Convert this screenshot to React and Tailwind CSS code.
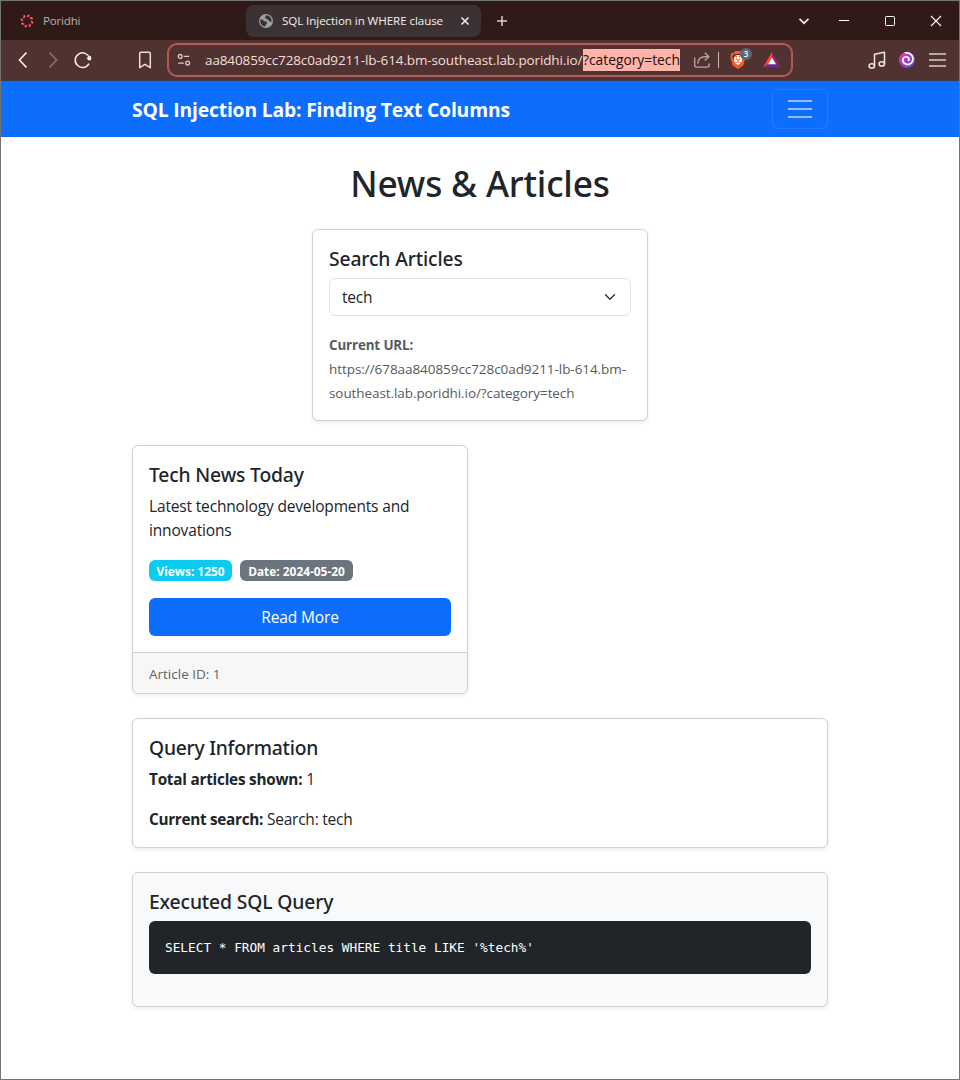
import React from "react";
import { SiBrave } from "react-icons/si";

function PoridhiLogo() {
  const petals = [0, 45, 90, 135, 180, 225, 270, 315];
  return (
    <svg width="14" height="14" viewBox="0 0 14 14" className="shrink-0">
      {petals.map((a, i) => (
        <g key={a} transform={`rotate(${a + 12} 7 7)`}>
          <path d="M6.300 2.500 7.300 1.500" stroke={i % 2 ? "#f0356f" : "#e92a72"} strokeWidth="1.900" strokeLinecap="round" />
          <circle cx="7.500" cy="1.400" r="0.800" fill="#f58a3c" />
        </g>
      ))}
    </svg>
  );
}

function Globe() {
  return (
    <svg width="14" height="14" viewBox="0 0 14 14" className="shrink-0">
      <circle cx="7" cy="7" r="7" fill="#9aa0a6" />
      <path
        d="M1.2 5.6C2.8 5.2 4 5.6 4.6 6.6c.5.8 1.6.6 2.6.9 1.2.4 1 1.6.3 2.3-.7.6-.5 1.600-1.200 2.500C3.400 12.300 1.300 9.800 1.200 7.400ZM7.600 1.300c-.9.5-.6 1.300-1.500 1.600-.8.3-.3 1.300.6 1.400 1 .1 1.300.700 1.200 1.300 1.300-.2 1.800.7 2.400 1.600.5.700 1.400.600 2.300.300C12.900 4.300 10.800 1.600 7.600 1.300Z"
        fill="#3c3233"
      />
    </svg>
  );
}

function TabStrip() {
  return (
    <div className="flex h-[39px] items-center bg-[#301a17]">
      <div className="flex w-[245px] shrink-0 items-center gap-[9px] pl-[19px]">
        <PoridhiLogo />
        <span className="text-[11.6px] tracking-[-0.2px] text-[#b9b0ae]">Poridhi</span>
      </div>
      <div className="flex h-8 w-[235px] shrink-0 items-center rounded-lg bg-[#3c3233] pl-[13px]">
        <Globe />
        <span className="ml-[9px] w-[175px] whitespace-nowrap text-[11.6px] tracking-[-0.08px] text-[#f5efee]">
          SQL Injection in WHERE clause
        </span>
        <svg width="16" height="16" viewBox="0 0 16 16" fill="none" stroke="#f0eaea" strokeWidth="1.6" className="shrink-0">
          <path d="m4.500 4.500 7 7m0-7-7 7" />
        </svg>
      </div>
      <svg width="12" height="12" viewBox="0 0 12 12" fill="none" stroke="#d9d0ce" strokeWidth="1.500" className="ml-[15px]">
        <path d="M6 1v10M1 6h10" />
      </svg>
      <div className="ml-auto flex items-center pr-[17px] text-white">
        <svg width="12" height="12" viewBox="0 0 12 12" fill="none" stroke="#ece5e4" strokeWidth="1.700">
          <path d="m1.500 3.800 4.500 4.400 4.500-4.400" />
        </svg>
        <svg width="12" height="12" viewBox="0 0 12 12" fill="none" stroke="currentColor" className="ml-[28px]">
          <path d="M1 5.500h10" />
        </svg>
        <svg width="12" height="12" viewBox="0 0 12 12" fill="none" stroke="currentColor" className="ml-[34px]">
          <rect x="1.500" y="1.500" width="9" height="9" rx="0.800" />
        </svg>
        <svg width="12" height="12" viewBox="0 0 12 12" fill="none" stroke="currentColor" strokeWidth="1.100" className="ml-[34px]">
          <path d="m1 1 10 10M11 1 1 11" />
        </svg>
      </div>
    </div>
  );
}

function BraveShield() {
  return (
    <span className="relative ml-[10px] block h-[18px] w-[18px]">
      <span className="absolute top-[4px] left-[5px] h-[10px] w-[8px] rounded-full bg-white" />
      <SiBrave className="absolute top-0 left-0 h-[18px] w-[18px] text-[#fb5a1c]" />
      <span className="absolute -top-[3px] left-[11px] flex h-3 w-3 items-center justify-center rounded-full bg-[#5f6573] text-[8px] leading-none font-semibold text-white">
        3
      </span>
    </span>
  );
}

function Toolbar() {
  return (
    <div className="flex h-[41px] items-center border-b border-[#3c3b4c] bg-[#503230]">
      <svg width="16" height="20" viewBox="0 0 16 20" fill="none" stroke="#f5eeed" strokeWidth="1.700" className="ml-[14px]">
        <path d="m11.500 2.500-7 7.500 7 7.500" />
      </svg>
      <svg width="16" height="20" viewBox="0 0 16 20" fill="none" stroke="#8b716e" strokeWidth="1.700" className="ml-[14px]">
        <path d="m4.500 2.500 7 7.500-7 7.500" />
      </svg>
      <svg width="20" height="20" viewBox="0 0 20 20" fill="none" stroke="#f5eeed" strokeWidth="1.500" className="ml-[12px]">
        <path d="M16.500 8A7.300 7.300 0 1 0 16 13.600" />
        <path d="m13.400 8.600 4.500-3.200.2 4.600Z" fill="#f5eeed" stroke="none" />
        <circle cx="16.300" cy="8.400" r="2" fill="#f5eeed" stroke="none" />
      </svg>
      <svg width="16" height="20" viewBox="0 0 16 20" fill="none" stroke="#eadfdd" strokeWidth="1.500" className="ml-[44px]">
        <path d="M2.700 3.500c0-.8.400-1.200 1.200-1.200h8.200c.8 0 1.200.4 1.200 1.200v14.200L8 14.300l-5.300 3.400Z" strokeLinejoin="round" />
      </svg>
      <div className="ml-[14px] flex h-[34px] w-[626px] items-center rounded-[10px] border-2 border-[#b25b56]">
        <svg width="14" height="14" viewBox="0 0 14 14" fill="none" stroke="#dccbc8" strokeWidth="1.300" className="ml-[8px]">
          <circle cx="3.200" cy="3.400" r="1.900" />
          <path d="M6.800 3.400h5.400M1.200 10.100h5.600" />
          <circle cx="10.600" cy="10.100" r="1.900" />
        </svg>
        <div className="ml-[14px] flex items-center whitespace-nowrap">
          <span className="w-[378px] text-[13.5px] tracking-[-0.12px] text-[#f1dfdc]">
            aa840859cc728c0ad9211-lb-614.bm-southeast.lab.poridhi.io/
          </span>
          <span className="h-[22px] w-[97px] bg-[#ffb3a9] text-[13.800px] leading-[22px] text-[#24100e]">
            ?category=tech
          </span>
        </div>
        <svg width="18" height="18" viewBox="0 0 18 18" fill="none" stroke="#b6a3a1" strokeWidth="1.400" className="ml-[13px]">
          <path d="M1.700 6.500v7.600c0 1.300.7 2 2 2h10.500c1.300 0 2-.7 2-2v-1.500M4.800 12.700c.2-4.300 2.800-7 7-7h3.700" />
          <path d="m11.800 1.800 4 3.900-4 3.900" />
        </svg>
        <span className="ml-[7px] block h-4 w-px bg-[#c5bab9]" />
        <BraveShield />
        <svg width="18" height="16" viewBox="0 0 18 16" className="ml-[16px]">
          <path d="M9 0 0 15.500 9 10Z" fill="#ff4724" />
          <path d="m9 0 9 15.500L9 10Z" fill="#9e1f63" />
          <path d="M0 15.500h18L9 9.500Z" fill="#662d91" />
          <path d="m9 5.500 4 6.700H5Z" fill="#fff" />
        </svg>
      </div>
      <svg width="18" height="18" viewBox="0 0 18 18" fill="none" stroke="#efe6e5" strokeWidth="1.500" className="ml-[75px]">
        <ellipse cx="3.800" cy="14.900" rx="2.700" ry="2.100" />
        <ellipse cx="13.800" cy="12.900" rx="2.700" ry="2.100" />
        <path d="M6.500 14.900V3.200l10-2v11.700" strokeLinejoin="round" />
      </svg>
      <svg width="16" height="16" viewBox="0 0 16 16" className="ml-[13px]">
        <defs>
          <linearGradient id="swirl" x1="0" y1="0" x2="1" y2="1">
            <stop offset="0" stopColor="#f03a9a" />
            <stop offset="0.500" stopColor="#a23bc8" />
            <stop offset="1" stopColor="#3f52dc" />
          </linearGradient>
        </defs>
        <circle cx="8" cy="8" r="8" fill="url(#swirl)" />
        <path
          d="M6.500 .7C11.500.6 14.600 4 13.900 7.800c-.7 3.500-4 5.400-7 4.400C4.200 11.300 3.300 8.700 4.200 6.700c.8-1.700 2.800-2.300 4.300-1.600 1.500.7 1.900 2.300 1 3.300"
          fill="none"
          stroke="#fff"
          strokeWidth="1.800"
          strokeLinecap="round"
        />
      </svg>
      <svg width="17" height="14" viewBox="0 0 17 14" className="ml-[14px]" stroke="#d8cecd" strokeWidth="1.500">
        <path d="M0 1h17M0 7h17M0 13h17" />
      </svg>
    </div>
  );
}

function Navbar() {
  return (
    <nav className="flex h-14 items-center justify-between bg-[#0d6efd] px-[131px]">
      <span className="pt-0.5 text-[19.3px] leading-[30px] font-bold tracking-[-0.16px] text-white">
        SQL Injection Lab: Finding Text Columns
      </span>
      <button className="rounded-md border border-white/10 px-3 py-1">
        <svg width="30" height="30" viewBox="0 0 30 30" stroke="#fff" strokeOpacity="0.550" strokeWidth="2" fill="none">
          <path d="M3 7h24M3 15h24M3 23h24" />
        </svg>
      </button>
    </nav>
  );
}

function Card({ className, children }) {
  return (
    <section className={`rounded-md border border-[#d0d1d2] shadow-[0_2px_4px_rgba(0,0,0,0.075)] ${className}`}>
      {children}
    </section>
  );
}

function Title({ children, className = "tracking-[-0.12px]" }) {
  return (
    <h5 className={`mb-[7px] pt-px font-['Noto_Sans',sans-serif] text-[19.3px] leading-6 font-medium ${className}`}>
      {children}
    </h5>
  );
}

export default function App() {
  return (
    <div className="flex h-[1080px] w-[960px] flex-col overflow-hidden border border-[#747474] bg-white font-['Open_Sans','Noto_Sans',sans-serif] text-[15.500px] leading-6 text-[#212529]">
      <TabStrip />
      <Toolbar />
      <Navbar />
      <main className="flex flex-col px-[131px] pt-[25px]">
        <h1 className="mb-[23px] text-center font-['Noto_Sans',sans-serif] text-[35.300px] leading-[43.680px] font-medium tracking-[-0.2px]">
          News &amp; Articles
        </h1>

        <Card className="mb-6 w-[336px] self-center bg-white p-4">
          <Title>Search Articles</Title>
          <div className="flex h-[38px] items-center justify-between rounded-md border border-[#dee2e6] pr-3 pl-3">
            <span className="tracking-[-0.2px]">tech</span>
            <svg width="16" height="12" viewBox="0 0 16 16" fill="none" stroke="#343a40" strokeWidth="2" strokeLinecap="round" strokeLinejoin="round">
              <path d="m2 5 6 6 6-6" />
            </svg>
          </div>
          <p className="mt-[17px] -mb-px text-[13.500px] whitespace-nowrap text-[#565b60]">
            <strong className="text-[13.400px] tracking-[-0.14px]">Current URL:</strong>
            <br />
            <span className="tracking-[-0.06px]">https://678aa840859cc728c0ad9211-lb-614.bm-</span>
            <br />
            <span className="tracking-[-0.08px]">southeast.lab.poridhi.io/?category=tech</span>
          </p>
        </Card>

        <Card className="mb-6 w-[336px] overflow-hidden bg-white">
          <div className="p-4">
            <Title className="tracking-[-0.16px]">Tech News Today</Title>
            <p className="mb-4 tracking-[-0.16px]">
              Latest technology developments
              and innovations
            </p>
            <div className="mb-[15px] flex h-[25px] items-center gap-2 pt-px text-[11.900px] leading-[23px] font-bold text-white">
              <span className="h-[21px] w-[83px] rounded-md bg-[#0dcaf0] text-center">Views: 1250</span>
              <span className="h-[21px] w-[113px] rounded-md bg-[#6c757d] text-center">Date: 2024-05-20</span>
            </div>
            <button className="block h-[38px] w-full rounded-md bg-[#0d6efd] tracking-[-0.12px] text-white">Read More</button>
          </div>
          <div className="border-t border-[#d0d1d2] bg-[#f7f7f7] px-4 pt-[9px] pb-[7px] text-[13.500px] text-[#5f6468]">
            Article ID: 1
          </div>
        </Card>

        <Card className="mb-6 bg-white p-4">
          <Title className="tracking-[-0.24px]">Query Information</Title>
          <p className="mb-4">
            <strong className="text-[15.300px] tracking-[-0.23px]">Total articles shown:</strong> 1
          </p>
          <p>
            <strong className="text-[15.300px] tracking-[-0.3px]">Current search:</strong>{" "}
            <span className="tracking-[-0.25px]">Search: tech</span>
          </p>
        </Card>

        <Card className="bg-[#f8f9fa] p-4">
          <Title>Executed SQL Query</Title>
          <pre className="mb-4 rounded-md bg-[#212529] p-4 font-['DejaVu_Sans_Mono',monospace] text-[12.780px] leading-[21px] text-white">
            SELECT * FROM articles WHERE title LIKE '%tech%'
          </pre>
        </Card>
      </main>
    </div>
  );
}
